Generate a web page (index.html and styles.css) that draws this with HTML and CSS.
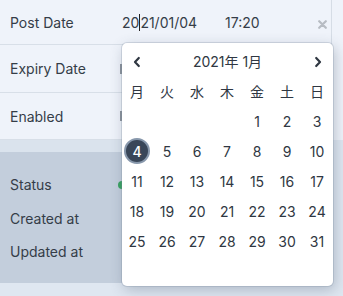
FILE: index.html
```html
<!DOCTYPE html>
<html>
<head>
<meta charset="utf-8">
<link rel="stylesheet" href="styles.css">
</head>
<body>
<div class="page">
  <div class="form">
    <div class="row row-first">
      <div class="label">Post Date</div>
      <div class="value">
        <span class="date">20<span class="caret"></span>21/01/04</span>
        <span class="time">17:20</span>
        <span class="clear">
          <svg width="9" height="9" viewBox="0 0 9 9"><path d="M1.2 1.2 L7.8 7.8 M7.8 1.2 L1.2 7.8" stroke="#b7bcc3" stroke-width="2.2" stroke-linecap="round"/></svg>
        </span>
      </div>
    </div>
    <div class="row">
      <div class="label">Expiry Date</div>
      <div class="value"><span class="mark"></span></div>
    </div>
    <div class="row row-last">
      <div class="label">Enabled</div>
      <div class="value"><span class="mark"></span></div>
    </div>
  </div>
  <div class="band"></div>
  <div class="panel">
    <div class="prow"><div class="label">Status</div><span class="dot"></span></div>
    <div class="prow"><div class="label">Created at</div></div>
    <div class="prow"><div class="label">Updated at</div></div>
  </div>
</div>

<div class="picker">
  <div class="head">
    <span class="nav">
      <svg width="10" height="12" viewBox="0 0 10 12"><path d="M6.8 2 L3 6 L6.8 10" fill="none" stroke="#2f3742" stroke-width="2.2" stroke-linecap="round" stroke-linejoin="round"/></svg>
    </span>
    <span class="title">2021年 1月</span>
    <span class="nav">
      <svg width="10" height="12" viewBox="0 0 10 12"><path d="M3.2 2 L7 6 L3.2 10" fill="none" stroke="#2f3742" stroke-width="2.2" stroke-linecap="round" stroke-linejoin="round"/></svg>
    </span>
  </div>
  <div class="grid">
    <span class="wd">月</span><span class="wd">火</span><span class="wd">水</span><span class="wd">木</span><span class="wd">金</span><span class="wd">土</span><span class="wd">日</span>
    <span></span><span></span><span></span><span></span><span class="d">1</span><span class="d">2</span><span class="d">3</span>
    <span class="d"><span class="sel">4</span></span><span class="d">5</span><span class="d">6</span><span class="d">7</span><span class="d">8</span><span class="d">9</span><span class="d">10</span>
    <span class="d">11</span><span class="d">12</span><span class="d">13</span><span class="d">14</span><span class="d">15</span><span class="d">16</span><span class="d">17</span>
    <span class="d">18</span><span class="d">19</span><span class="d">20</span><span class="d">21</span><span class="d">22</span><span class="d">23</span><span class="d">24</span>
    <span class="d">25</span><span class="d">26</span><span class="d">27</span><span class="d">28</span><span class="d">29</span><span class="d">30</span><span class="d">31</span>
    <span></span><span></span><span></span><span></span><span></span><span></span><span></span>
  </div>
</div>
</body>
</html>
```

FILE: styles.css
```css
html, body {
  margin: 0;
  padding: 0;
}
body {
  width: 343px;
  height: 296px;
  overflow: hidden;
  background: #dfe7f1;
  font-family: Inter, "Noto Sans", "Noto Sans CJK JP", sans-serif;
  font-size: 14px;
  color: #353d48;
  position: relative;
}
.page {
  display: flex;
  flex-direction: column;
}
.form {
  background: #eff3fa;
  width: 343px;
}
.row {
  display: flex;
  align-items: center;
  height: 48px;
  border-bottom: 1px solid #d8dfe8;
  width: 332px;
  border-right: 1px solid #d6dde6;
  box-sizing: border-box;
}
.row-first { height: 45px; }
.row-last { height: 47px; }
.label {
  width: 112px;
  padding-left: 10px;
  flex: none;
}
.value {
  flex: 1;
  display: flex;
  align-items: center;
  position: relative;
  height: 100%;
}
.date { width: 103px; }
.caret {
  display: inline-block;
  width: 1px;
  height: 17px;
  background: #222;
  vertical-align: -3px;
}
.time { flex: 1; }
.clear {
  width: 16px;
  margin-right: 1px;
  display: flex;
  justify-content: center;
  margin-top: 5px;
}
.mark {
  display: inline-block;
  width: 2px;
  height: 10px;
  background: #8c939c;
  margin-left: -2px;
}
.band {
  height: 12px;
  width: 332px;
  background: #dae3ed;
}
.panel {
  width: 332px;
  height: 131px;
  background: #c3cedc;
  padding-top: 16px;
  box-sizing: border-box;
}
.prow {
  display: flex;
  align-items: center;
  height: 33.5px;
}
.dot {
  width: 8px;
  height: 8px;
  border-radius: 50%;
  background: #3aa361;
  margin-left: -4px;
}
.picker {
  position: absolute;
  left: 122px;
  top: 43px;
  width: 211px;
  height: 243px;
  box-sizing: border-box;
  padding-top: 3px;
  background: #fff;
  border-radius: 5px;
  box-shadow: 0 0 0 1px rgba(120, 135, 155, 0.25), 2px 4px 14px rgba(60, 75, 100, 0.3);
}
.head {
  display: flex;
  align-items: center;
  height: 30px;
}
.nav {
  width: 30px;
  display: flex;
  justify-content: center;
  align-items: center;
  padding-top: 2px;
}
.title {
  flex: 1;
  text-align: center;
  color: #2f3742;
}
.grid {
  display: grid;
  grid-template-columns: repeat(7, 30px);
  grid-auto-rows: 30px;
}
.grid > span {
  display: flex;
  align-items: center;
  justify-content: center;
  color: #2f3742;
}
.sel {
  width: 22px;
  height: 22px;
  border-radius: 50%;
  background: #394658;
  border: 2px solid #8898ac;
  color: #fff;
  display: flex;
  align-items: center;
  justify-content: center;
  font-weight: 500;
}
```
